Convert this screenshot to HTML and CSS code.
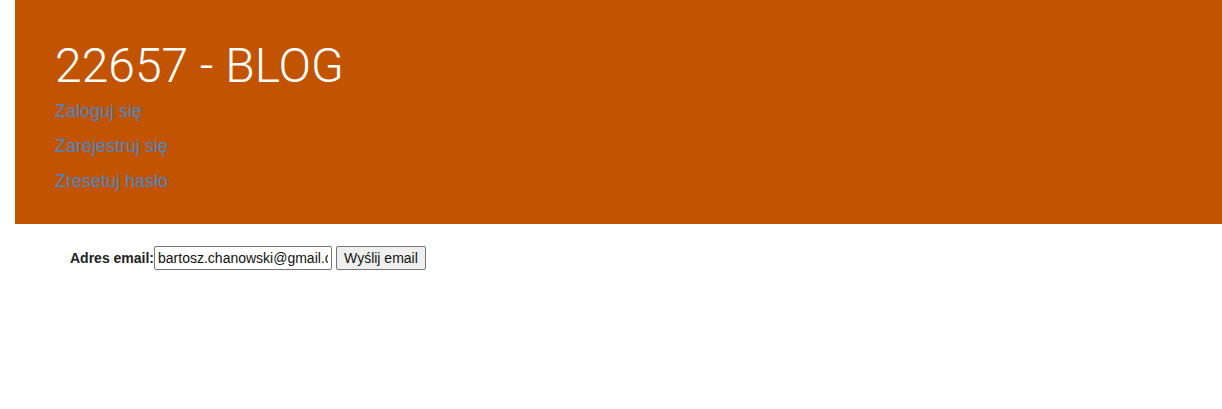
FILE: index.html
```html
<!DOCTYPE html>
<html lang="pl">
<head>
<meta charset="utf-8">
<title>22657 - BLOG</title>
<link rel="stylesheet" href="styles.css">
</head>
<body>
<header class="header">
  <h1 class="title">22657 - BLOG</h1>
  <nav class="nav">
    <a class="nav-link" href="#">Zaloguj się</a>
    <a class="nav-link" href="#">Zarejestruj się</a>
    <a class="nav-link" href="#">Zresetuj hasło</a>
  </nav>
</header>
<main class="content">
  <form class="reset-form">
    <label class="label" for="email">Adres email:</label><input class="email" id="email" type="text" value="bartosz.chanowski@gmail.com"><button class="send" type="button">Wyślij email</button>
  </form>
</main>
</body>
</html>
```
FILE: styles.css
```css
html, body {
  margin: 0;
  padding: 0;
  background: #ffffff;
  font-family: "Liberation Sans", Arial, sans-serif;
}
.header {
  margin-left: 15px;
  background: #c25300;
  padding: 38px 40px 28px 40px;
  height: 158px;
}
.title {
  margin: 0;
  font-family: Roboto, "Liberation Sans", sans-serif;
  font-weight: 300;
  font-size: 48px;
  line-height: 56px;
  color: #ffffff;
}
.nav {
  display: flex;
  flex-direction: column;
  margin-top: 0;
}
.nav-link {
  font-size: 18px;
  line-height: 35px;
  color: #4a86c8;
  text-decoration: none;
}
.content {
  padding: 22px 0 0 70px;
}
.reset-form {
  display: flex;
  align-items: center;
  margin: 0;
}
.label {
  font-weight: bold;
  font-size: 14px;
  color: #222222;
}
.email {
  width: 178px;
  height: 24px;
  box-sizing: border-box;
  font-family: "Liberation Sans", Arial, sans-serif;
  font-size: 14px;
  padding: 1px 3px;
  border: 1px solid #767676;
  border-radius: 2px;
  color: #111111;
  margin: 0;
}
.send {
  margin: 0 0 0 4px;
  height: 24px;
  box-sizing: border-box;
  font-family: "Liberation Sans", Arial, sans-serif;
  font-size: 14px;
  padding: 1px 7px;
  border: 1px solid #767676;
  border-radius: 2px;
  background: #efefef;
  color: #111111;
}
```
